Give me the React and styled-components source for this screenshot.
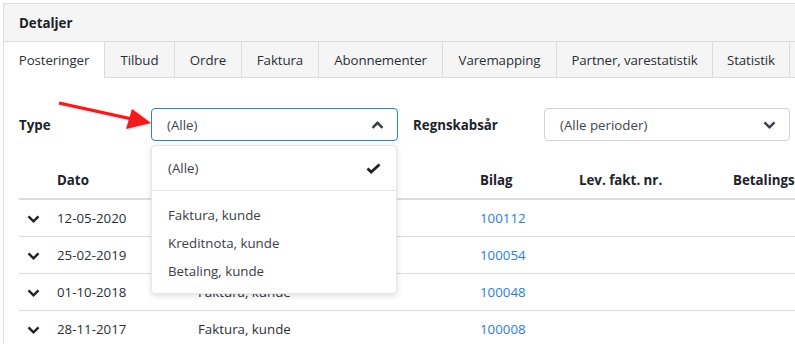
import React from "react";
import styled, { createGlobalStyle } from "styled-components";

const GlobalStyle = createGlobalStyle`
  html, body {
    margin: 0;
    padding: 0;
    background: #fff;
    overflow: hidden;
  }
  body {
    font-family: "Open Sans", "Noto Sans", sans-serif;
    font-size: 13.3px;
    color: #212529;
  }
`;

const tabs = [
  { label: "Posteringer", width: 101 },
  { label: "Tilbud", width: 70 },
  { label: "Ordre", width: 67 },
  { label: "Faktura", width: 77 },
  { label: "Abonnementer", width: 124 },
  { label: "Varemapping", width: 114 },
  { label: "Partner, varestatistik", width: 156 },
  { label: "Statistik", width: 77 },
];

const rows = [
  { date: "12-05-2020", type: "Faktura, kunde", bilag: "100112" },
  { date: "25-02-2019", type: "Kreditnota, kunde", bilag: "100054" },
  { date: "01-10-2018", type: "Faktura, kunde", bilag: "100048" },
  { date: "28-11-2017", type: "Faktura, kunde", bilag: "100008" },
];

const options = ["Faktura, kunde", "Kreditnota, kunde", "Betaling, kunde"];

function Chevron({ up }) {
  return (
    <svg width="13" height="8" viewBox="0 0 13 8">
      <path
        d={up ? "M1.5 6.8 L6.5 1.8 L11.5 6.8" : "M1.5 1.3 L6.5 6.3 L11.5 1.3"}
        fill="none"
        stroke="currentColor"
        strokeWidth="2.4"
      />
    </svg>
  );
}

function Check() {
  return (
    <svg width="15" height="11" viewBox="0 0 15 11">
      <path d="M1.5 5.5 L5.2 9 L13.5 1.5" fill="none" stroke="#222" strokeWidth="2.8" />
    </svg>
  );
}

function App() {
  return (
    <Page>
      <GlobalStyle />
      <Panel>
        <Header>Detaljer</Header>
        <TabBar>
          {tabs.map((t, i) => (
            <Tab key={t.label} $active={i === 0} $width={t.width}>
              {t.label}
            </Tab>
          ))}
        </TabBar>
        <Body>
          <Arrow width="110" height="40" viewBox="0 0 110 40">
            <defs>
              <filter id="sh" x="-10%" y="-30%" width="120%" height="160%">
                <feDropShadow dx="1" dy="1" stdDeviation="1" floodColor="#000" floodOpacity="0.25" />
              </filter>
            </defs>
            <g filter="url(#sh)">
              <line x1="5" y1="7" x2="78" y2="23" stroke="#ee1c1c" strokeWidth="3.2" />
              <polygon points="97,27 72,33 78,13" fill="#ee1c1c" />
            </g>
          </Arrow>
          <FilterRow>
            <FilterLabel $width={132}>Type</FilterLabel>
            <SelectWrap $width={247}>
              <Select $open>
                <span>(Alle)</span>
                <Chevron up />
              </Select>
              <Menu>
                <MenuItem $selected>
                  <span>(Alle)</span>
                  <Check />
                </MenuItem>
                <Divider />
                {options.map((o) => (
                  <MenuItem key={o}>{o}</MenuItem>
                ))}
              </Menu>
            </SelectWrap>
            <FilterLabel $width={131} $gap>
              Regnskabsår
            </FilterLabel>
            <SelectWrap $width={246}>
              <Select>
                <span>(Alle perioder)</span>
                <Chevron />
              </Select>
            </SelectWrap>
          </FilterRow>
          <Table>
            <HeadRow>
              <Cell />
              <Cell>Dato</Cell>
              <Cell>Type</Cell>
              <Cell>Bilag</Cell>
              <Cell>Lev. fakt. nr.</Cell>
              <Cell>Betalingsdato</Cell>
            </HeadRow>
            {rows.map((r) => (
              <Row key={r.bilag}>
                <Cell>
                  <Toggle>
                    <Chevron />
                  </Toggle>
                </Cell>
                <Cell>{r.date}</Cell>
                <Cell>{r.type}</Cell>
                <Cell>
                  <Link href="#">{r.bilag}</Link>
                </Cell>
                <Cell />
                <Cell />
              </Row>
            ))}
          </Table>
        </Body>
      </Panel>
    </Page>
  );
}

const Page = styled.div`
  padding: 3px 0 0 3px;
  width: 1000px;
`;

const Panel = styled.div`
  border: 1px solid #dcdcdc;
  border-right: none;
  width: 990px;
`;

const Header = styled.div`
  height: 37px;
  display: flex;
  align-items: center;
  padding-left: 15px;
  background: #f5f5f5;
  border-bottom: 1px solid #dcdcdc;
  font-weight: 700;
  color: #1e2229;
`;

const TabBar = styled.div`
  display: flex;
  height: 35px;
  background: #f5f5f5;
  border-bottom: 1px solid #dcdcdc;
`;

const Tab = styled.div`
  width: ${(p) => p.$width}px;
  box-sizing: border-box;
  display: flex;
  align-items: center;
  justify-content: center;
  border-right: 1px solid #dcdcdc;
  background: ${(p) => (p.$active ? "#fff" : "transparent")};
  height: ${(p) => (p.$active ? "36px" : "35px")};
  color: #2b2f36;
  letter-spacing: -0.1px;
`;

const Body = styled.div`
  position: relative;
  padding: 30px 0 0 15px;
  height: 300px;
`;

const Arrow = styled.svg`
  position: absolute;
  left: 50px;
  top: 18px;
  overflow: visible;
`;

const FilterRow = styled.div`
  display: flex;
  align-items: center;
  height: 33px;
`;

const FilterLabel = styled.div`
  width: ${(p) => p.$width}px;
  margin-left: ${(p) => (p.$gap ? "15px" : "0")};
  font-weight: 700;
  color: #1e2229;
`;

const SelectWrap = styled.div`
  position: relative;
  width: ${(p) => p.$width}px;
`;

const Select = styled.div`
  height: 33px;
  box-sizing: border-box;
  display: flex;
  align-items: center;
  justify-content: space-between;
  padding: 0 13px 0 15px;
  border: 1px solid ${(p) => (p.$open ? "#2a7de1" : "#cfd3d7")};
  border-radius: 4px;
  color: #3f454c;
  background: #fff;
  svg {
    color: #3a3f45;
  }
`;

const Menu = styled.div`
  position: absolute;
  left: 0;
  top: 37px;
  width: 246px;
  box-sizing: border-box;
  background: #fff;
  border: 1px solid #e6e6e6;
  border-radius: 4px;
  box-shadow: 0 2px 6px rgba(0, 0, 0, 0.13);
  padding: 8px 0;
  z-index: 5;
`;

const MenuItem = styled.div`
  height: 28px;
  display: flex;
  align-items: center;
  justify-content: space-between;
  padding: 0 15px 0 16px;
  color: #3b4047;
`;

const Divider = styled.div`
  height: 1px;
  background: #e4e4e4;
  margin: 8px 0 10px;
`;

const Table = styled.div`
  margin-top: 20px;
`;

const HeadRow = styled.div`
  display: grid;
  grid-template-columns: 38px 141px 282px 99px 154px 200px;
  height: 37px;
  align-items: center;
  border-bottom: 2px solid #dcdcdc;
  font-weight: 700;
  color: #1e2229;
`;

const Row = styled.div`
  display: grid;
  grid-template-columns: 38px 141px 282px 99px 154px 200px;
  height: 36px;
  align-items: center;
  border-bottom: 1px solid #dcdcdc;
  color: #2b2f36;
`;

const Cell = styled.div`
  white-space: nowrap;
`;

const Toggle = styled.span`
  display: inline-flex;
  margin-left: 8px;
  color: #1e2229;
`;

const Link = styled.a`
  color: #2a7de1;
  text-decoration: none;
`;

export default App;
